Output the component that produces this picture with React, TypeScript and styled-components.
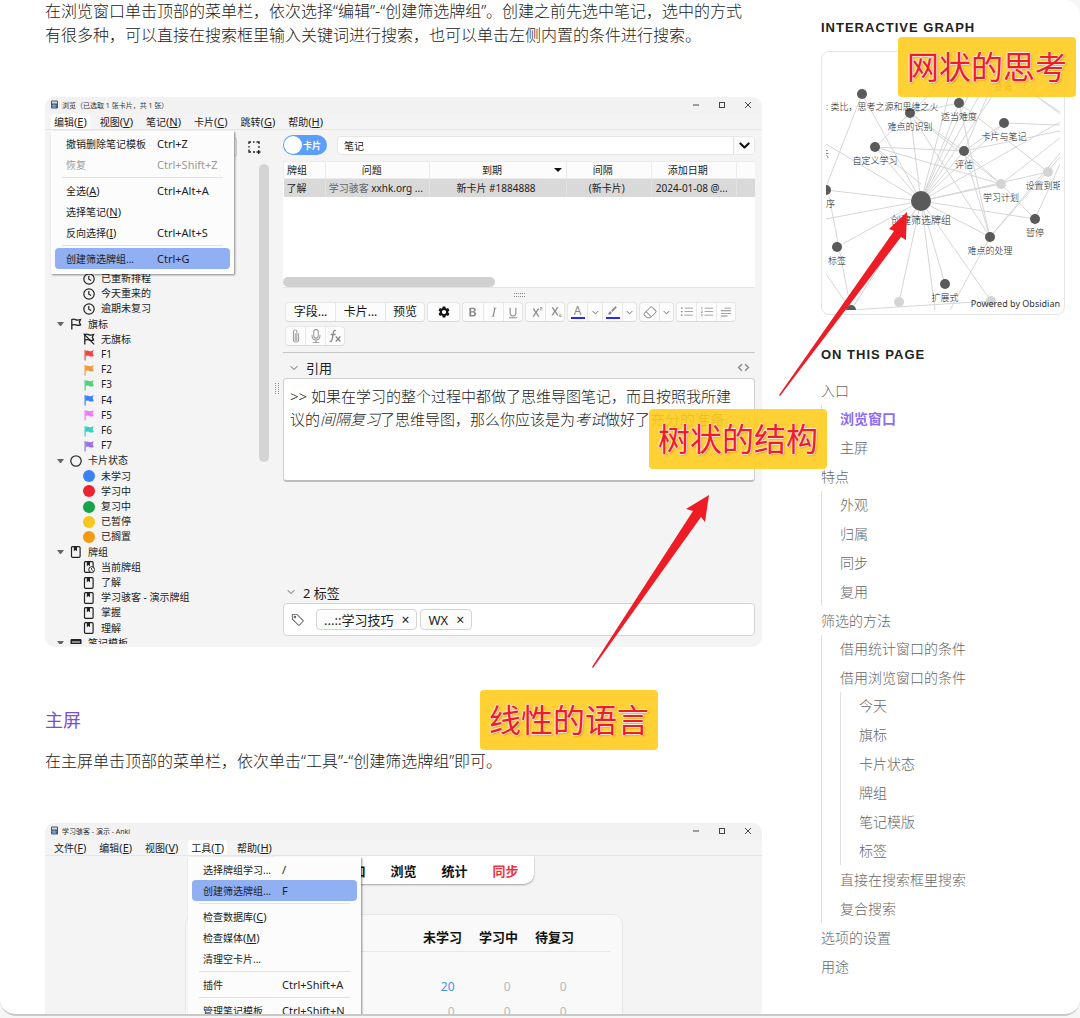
import React from "react";
import styled, { createGlobalStyle } from "styled-components";
import {
  BsTypeBold, BsTypeItalic, BsTypeUnderline, BsEraser, BsListUl, BsListOl, BsTextParagraph,
  BsPaperclip, BsMic, BsChevronDown, BsCode, BsTag,
} from "react-icons/bs";
import { MdSettings, MdSuperscript, MdSubscript, MdBrush } from "react-icons/md";

const sans = `"Noto Sans", "Noto Sans CJK SC", sans-serif`;

const GlobalStyle = createGlobalStyle`
  *, *::before, *::after { box-sizing: border-box; }
  body { margin: 0; background: #f6f6f6; font-family: ${sans}; color: #222; }
  button, input { font-family: inherit; color: inherit; }
  button { cursor: pointer; padding: 0; }
  ul, h1, h2, p { margin: 0; padding: 0; }
  ul { list-style: none; }
`;

/* ---------- Page ---------- */

const Frame = styled.div`
  position: relative;
  height: calc(100vh - 2px);
  overflow: hidden;
  background: #fff;
  border-bottom: 2px solid #c9c9c9;
  border-radius: 0 16px 16px 16px;
  display: grid;
  grid-template-columns: minmax(0, 1fr) 244px;
  column-gap: 59px;
  padding: 0 15px 0 45px;
`;

const Article = styled.main`
  display: flex;
  flex-direction: column;
  min-width: 0;
  margin-top: -1px;
`;

const Paragraph = styled.p`
  font-size: 16px;
  line-height: 24px;
  font-weight: 300;
  color: #222;
`;

const Heading = styled.h2`
  font-size: 18px;
  line-height: 26px;
  font-weight: 400;
  color: #7b4ccf;
  margin: 60px 0 16px;
`;

/* ---------- Window chrome ---------- */

const Window = styled.section`
  position: relative;
  background: #f4f4f4;
  border-radius: 10px;
  overflow: hidden;
  font-size: 10px;
  margin-top: 50px;
  flex-shrink: 0;
`;

const TitleBar = styled.header`
  height: 17px;
  background: #f2f2f2;
  display: flex;
  align-items: center;
  gap: 3px;
  padding: 0 9px 2px 5px;
  font-size: 7px;
  color: #333;
`;

const WindowButtons = styled.div`
  margin-left: auto;
  display: flex;
  gap: 16px;
`;

const WindowButton = styled.button`
  border: 0;
  background: none;
  width: 10px;
  height: 10px;
  display: flex;
  align-items: center;
  justify-content: center;
  svg { width: 8px; height: 8px; stroke: #444; fill: none; }
`;

const MenuBar = styled.nav`
  height: 16px;
  border-bottom: 1px solid #e6e6e6;
  display: flex;
  gap: 7px;
  padding-left: 6px;
`;

const MenuButton = styled.button<{ $open?: boolean }>`
  border: 0;
  border-radius: 3px 3px 0 0;
  padding: 0 3px;
  font-size: 10px;
  line-height: 15px;
  white-space: nowrap;
  background: ${(p) => (p.$open ? "#fff" : "transparent")};
`;

const Key = styled.span`
  font-size: 11px;
`;

const Dropdown = styled.div<{ $left: number }>`
  position: absolute;
  z-index: 2;
  top: 34px;
  left: ${(p) => p.$left}px;
  background: #fcfcfc;
  padding: 2px 4px 5px;
  box-shadow: 1px 1px 2px rgba(0, 0, 0, 0.45);
`;

const MenuItem = styled.button<{ $active?: boolean; $keyAt: number }>`
  width: 100%;
  height: 21px;
  display: grid;
  grid-template-columns: ${(p) => p.$keyAt}px 1fr;
  align-items: center;
  text-align: left;
  border: 0;
  border-radius: 4px;
  padding: 0 12px 0 11px;
  font-size: 10px;
  white-space: nowrap;
  background: ${(p) => (p.$active ? "#91aff3" : "transparent")};
  &:disabled { color: #9a9a9a; }
`;

const MenuRule = styled.hr`
  border: 0;
  height: 1px;
  margin: 2px 7px;
  background: #e2e2e2;
`;

/* ---------- Browser window: side tree ---------- */

const BrowserBody = styled.div`
  display: grid;
  grid-template-columns: 226px 12px minmax(0, 1fr);
  grid-template-rows: 100%;
  padding-right: 7px;
  height: 517px;
`;

const Side = styled.aside`
  display: grid;
  grid-template-columns: minmax(0, 1fr) 10px;
  grid-template-rows: 34px minmax(0, 1fr);
  padding: 0 2px 3px 0;
`;

const SideTools = styled.div`
  grid-column: 1 / 3;
  display: flex;
  align-items: center;
  gap: 11px;
  padding: 0 8px 0 6px;
`;

const SideSearch = styled.input`
  flex: 1;
  min-width: 0;
  height: 20px;
  border: 1px solid #ccc;
  border-radius: 3px;
  background: #efefef;
`;

const IconButton = styled.button`
  border: 0;
  background: none;
  display: flex;
  svg { width: 13px; height: 13px; }
`;

const TreeView = styled.div`
  overflow: hidden;
  padding-top: 107px;
`;

const Tree = styled.ul`
  height: 380px;
  display: grid;
  grid-auto-rows: 1fr;
`;

const TreeItem = styled.li<{ $level: number }>`
  display: flex;
  align-items: center;
  gap: 6px;
  padding-left: ${(p) => (p.$level ? 38 : 12)}px;
  font-size: 10px;
  line-height: 15px;
  white-space: nowrap;
  svg { width: 12px; height: 12px; flex-shrink: 0; }
`;

const Twisty = styled.span`
  width: 7px;
  border: 3px solid transparent;
  border-bottom: 0;
  border-top: 4px solid #666;
`;

const Dot = styled.span<{ $color: string }>`
  width: 12px;
  height: 12px;
  border-radius: 50%;
  background: ${(p) => p.$color};
`;

const ScrollThumb = styled.div`
  height: 298px;
  border-radius: 5px;
  background: #d4d4d4;
`;

const Splitter = styled.div`
  display: flex;
  justify-content: center;
  align-items: center;
`;

const Grip = styled.div<{ $vertical?: boolean }>`
  width: ${(p) => (p.$vertical ? 4 : 11)}px;
  height: ${(p) => (p.$vertical ? 11 : 4)}px;
  border: 1px dotted #8c8c8c;
  border-width: ${(p) => (p.$vertical ? "0 1px" : "1px 0")};
`;

/* ---------- Browser window: right pane ---------- */

const Pane = styled.div`
  display: flex;
  flex-direction: column;
  min-width: 0;
`;

const SearchRow = styled.div`
  display: flex;
  align-items: center;
  gap: 10px;
  margin: 5px 0 6px;
`;

const Toggle = styled.button`
  width: 44px;
  height: 20px;
  border: 0;
  border-radius: 10px;
  background: #5c9efc;
  color: #fff;
  font-size: 9px;
  font-weight: 600;
  display: flex;
  align-items: center;
  gap: 1px;
  padding: 0 1px;
  white-space: nowrap;
  &::before {
    content: "";
    width: 18px;
    height: 18px;
    border-radius: 50%;
    background: #fff;
  }
`;

const Combo = styled.div`
  flex: 1;
  height: 19px;
  display: flex;
  background: #fff;
  border: 1px solid #e6e6e6;
  border-radius: 4px;
  overflow: hidden;
`;

const ComboInput = styled.input`
  flex: 1;
  border: 0;
  outline: 0;
  padding: 0 6px;
  font-size: 10px;
  background: transparent;
`;

const ComboButton = styled.button`
  width: 21px;
  border: 0;
  border-left: 1px solid #e0e0e0;
  background: #fcfcfc;
  display: flex;
  align-items: center;
  justify-content: center;
  svg { width: 11px; height: 11px; stroke-width: 2; stroke: #111; }
`;

const TableArea = styled.div`
  height: 127px;
  display: flex;
  flex-direction: column;
  background: #fff;
  border-bottom: 1px solid #e4e4e4;
`;

const CardTable = styled.table`
  width: 100%;
  table-layout: fixed;
  border-collapse: collapse;
  font-size: 10px;
  line-height: 16px;
  text-align: center;
  white-space: nowrap;
  th { font-weight: 400; background: #fcfcfc; height: 17px; padding: 0 12px 0 0; border: 1px solid #ececec; }
  td { background: #d9d9d9; height: 18px; padding: 0 4px 0 0; border-right: 1px solid #e2e2e2; overflow: hidden; }
  th:first-child, td:first-child { text-align: left; padding: 0 0 0 3px; }
  th:last-child, td:last-child { border-right: 0; padding: 0; }
`;

const HeadCell = styled.div`
  position: relative;
`;

const SortMark = styled.span`
  position: absolute;
  right: -8px;
  top: 6px;
  border: 4px solid transparent;
  border-top-color: #111;
  border-bottom: 0;
`;

const Muted = styled.span`
  color: #666;
`;

const HorizontalThumb = styled.div`
  width: 45%;
  height: 10px;
  margin-top: auto;
  border-radius: 5px;
  background: #d0d0d0;
`;

const GripRow = styled.div`
  height: 14px;
  display: flex;
  align-items: center;
  justify-content: center;
`;

const Toolbar = styled.div`
  display: flex;
  flex-wrap: wrap;
  gap: 4px 2px;
  padding: 0 0 6px 2px;
  border-bottom: 1px solid #c8c8c8;
`;

const Group = styled.div`
  height: 20px;
  display: flex;
  background: #fcfcfc;
  border: 1px solid #e6e6e6;
  border-bottom-color: #d8d8d8;
  border-radius: 4px;
`;

const Tool = styled.button<{ $width: number; $strong?: boolean }>`
  width: ${(p) => p.$width}px;
  border: 0;
  background: none;
  display: flex;
  flex-direction: column;
  align-items: center;
  justify-content: center;
  gap: 1px;
  font-size: 12px;
  line-height: 18px;
  white-space: nowrap;
  color: ${(p) => (p.$strong ? "#151515" : "#8a8a8a")};
  & + & { border-left: 1px solid #e8e8e8; }
  svg { width: 14px; height: 14px; }
`;

const TinyChevron = styled(BsChevronDown)`
  && { width: 7px; height: 7px; stroke-width: 1; }
`;

const GlyphA = styled.span`
  font-size: 12px;
  line-height: 11px;
`;

const Swatch = styled.span`
  width: 14px;
  height: 2px;
  background: #2a2af0;
`;

const SwatchBrush = styled(MdBrush)`
  && { width: 11px; height: 11px; }
`;

const FieldHead = styled.div<{ $tall?: boolean }>`
  height: ${(p) => (p.$tall ? 25 : 22)}px;
  display: flex;
  align-items: center;
  gap: 8px;
  padding: ${(p) => (p.$tall ? "4px 5px 0 7px" : "0 5px 0 4px")};
  font-size: 13px;
  svg { width: 8px; height: 8px; color: #888; stroke-width: 1; }
  svg:last-child:not(:first-child) { width: 13px; height: 13px; margin-left: auto; }
`;

const FieldBox = styled.div`
  height: 104px;
  background: #fff;
  border: 1px solid #cfcfcf;
  border-bottom: 2px solid #bdbdbd;
  border-radius: 4px;
  padding: 6px;
  font-size: 15px;
  line-height: 23px;
  font-weight: 300;
  color: #222;
`;

const TagsArea = styled.div`
  margin-top: auto;
  margin-bottom: 11px;
`;

const TagBox = styled.div`
  height: 33px;
  background: #fff;
  border: 1px solid #d4d4d4;
  border-radius: 4px;
  display: flex;
  align-items: center;
  gap: 3px;
  padding: 0 7px;
`;

const TagIcon = styled(BsTag)`
  width: 14px;
  height: 14px;
  margin-right: 8px;
  color: #555;
`;

const Tag = styled.span`
  height: 21px;
  display: flex;
  align-items: center;
  gap: 8px;
  border: 1px solid #d4d4d4;
  border-radius: 4px;
  background: #fcfcfc;
  padding: 0 7px;
  font-size: 13px;
`;

const TagClose = styled.button`
  border: 0;
  background: none;
  font-size: 14px;
  line-height: 16px;
`;

/* ---------- Main window ---------- */

const MainBody = styled.div`
  height: 300px;
  display: flex;
  flex-direction: column;
  align-items: center;
`;

const TopNav = styled.nav`
  display: flex;
  gap: 25px;
  height: 28px;
  align-items: center;
  padding: 0 15px;
  background: #fff;
  border-radius: 0 0 10px 10px;
  box-shadow: 0 1px 2px rgba(0, 0, 0, 0.35);
`;

const NavLink = styled.a<{ $alert?: boolean }>`
  font-size: 13px;
  font-weight: 700;
  text-decoration: none;
  color: ${(p) => (p.$alert ? "#f0323c" : "#111")};
`;

const DeckPanel = styled.div`
  width: 438px;
  flex: 1;
  margin-top: 30px;
  padding: 10px 12px;
  background: #f9f9f9;
  border: 1px solid #e6e6e6;
  border-radius: 10px;
`;

const DeckTable = styled.table`
  width: 100%;
  border-collapse: collapse;
  font-size: 12px;
  line-height: 25px;
  th { font-size: 13px; font-weight: 700; height: 26px; width: 56px; padding: 0; color: #111; white-space: nowrap; border-bottom: 1px solid #e6e6e6; }
  th:first-child { width: auto; }
  th:last-child { width: 27px; }
  tbody::before { content: ""; display: block; height: 22px; }
  td { text-align: right; padding: 0 16px 0 0; height: 25px; color: #b8b8b8; }
  td:last-child { padding: 0; }
`;

const NewCount = styled.span`
  color: #4b8df5;
`;

/* ---------- Sidebar ---------- */

const Sidebar = styled.aside`
  padding-top: 18px;
  min-width: 0;
`;

const SideTitle = styled.h2`
  font-family: "Liberation Sans", Arial, sans-serif;
  font-size: 13px;
  line-height: 20px;
  font-weight: 700;
  letter-spacing: 1px;
  color: #222;
`;

const GraphCard = styled.div`
  position: relative;
  height: 264px;
  margin: 13px 0 30px;
  padding: 4px;
  border: 1px solid #e4e4e4;
  border-radius: 8px;
  svg { display: block; width: 100%; height: 100%; }
`;

const GraphCredit = styled.span`
  position: absolute;
  right: 4px;
  bottom: 3px;
  font-size: 9px;
  line-height: 14px;
  color: #333;
`;

const TocList = styled.ul<{ $nested?: boolean }>`
  margin-top: ${(p) => (p.$nested ? 0 : 12)}px;
  padding-left: ${(p) => (p.$nested ? 18 : 0)}px;
  border-left: ${(p) => (p.$nested ? "1px solid #e0e0e0" : "0")};
`;

const TocItem = styled.li`
  & + & { margin-top: 1px; }
`;

const TocLink = styled.a<{ $active?: boolean }>`
  display: block;
  font-size: 14px;
  line-height: 28px;
  font-weight: ${(p) => (p.$active ? 600 : 300)};
  color: ${(p) => (p.$active ? "#8d6cf5" : "#666")};
  text-decoration: none;
`;

/* ---------- Annotations ---------- */

const Callout = styled.div<{ $right: number; $top: number }>`
  position: absolute;
  z-index: 5;
  right: ${(p) => p.$right}px;
  top: ${(p) => p.$top}px;
  padding: 0 9px;
  border-radius: 4px;
  background: rgba(255, 204, 30, 0.9);
  color: #ee1c25;
  font-size: 32px;
  line-height: 60px;
  white-space: nowrap;
  text-shadow: 1px 0 #fbe3d8, -1px 0 #fbe3d8, 0 1px #fbe3d8, 0 -1px #fbe3d8, 1px 1px 2px rgba(120, 60, 0, 0.5);
`;

const Arrow = styled.svg<{ $right: number; $top: number }>`
  position: absolute;
  z-index: 4;
  right: ${(p) => p.$right}px;
  top: ${(p) => p.$top}px;
  fill: #ee1c25;
  pointer-events: none;
`;

/* ---------- Icons ---------- */

const AppIcon = () => (
  <svg width="9" height="9" viewBox="0 0 9 9" aria-hidden="true">
    <rect x="1" y="0.5" width="7" height="8" rx="1" fill="#4b5563" />
    <rect x="2" y="1.5" width="5" height="2" fill="#cfd8e3" />
    <path d="M4 3.5l1 1.6 1.9.2-1.4 1.2.4 1.8L4 7.4 2.3 8.3l.4-1.8L1.3 5.3l1.8-.2z" fill="#5aa7e8" />
  </svg>
);

const Clock = () => (
  <svg viewBox="0 0 12 12" fill="none" stroke="#222" strokeWidth="1.2" aria-hidden="true">
    <circle cx="6" cy="6" r="5.2" />
    <path d="M5.8 3v3.200l2.400 1.400" />
  </svg>
);

const Flag = ({ color }: { color: string }) => (
  <svg viewBox="0 0 12 12" aria-hidden="true">
    <path d="M1.5 1h1.2v10.5H1.5z" fill={color} />
    <path d="M2.5 2c1.500-.9 2.500-.6 3.500 0s2.500.3 4.800-1L9.600 4l1.200 3C8.500 8 7 7.600 6 7s-2-.6-3.500.2z" fill={color} />
  </svg>
);

const FlagOutline = ({ off }: { off?: boolean }) => (
  <svg viewBox="0 0 12 12" fill="none" stroke="#222" strokeWidth="1.3" aria-hidden="true">
    <path d="M1.8 11.5V1.6c1.5-.7 2.7-.5 3.7 0s2.8.6 5 0L9.3 4.3l1.3 2.6c-2 .8-3.6.5-4.7 0s-2.5-.5-4 .2" />
    {off && <path d="M.6.6l10.500 10.800" />}
  </svg>
);

const Ring = () => (
  <svg viewBox="0 0 12 12" aria-hidden="true"><circle cx="6" cy="6" r="5.200" fill="none" stroke="#333" strokeWidth="1.300" /></svg>
);

const Deck = ({ clock }: { clock?: boolean }) => (
  <svg viewBox="0 0 12 12" aria-hidden="true">
    <rect x="1.5" y="0.7" width="8.6" height="10.600" rx="1" fill="none" stroke="#222" strokeWidth="1.200" />
    <path d="M3.800 1v4.300l1.600-1.200L7 5.300V1z" fill="#222" />
    {clock && <><circle cx="8.600" cy="8.600" r="2.900" fill="#f4f4f4" stroke="#222" /><path d="M8.500 7v1.800l1.200.6" fill="none" stroke="#222" strokeWidth=".8" /></>}
  </svg>
);

const NoteType = () => (
  <svg viewBox="0 0 12 12" aria-hidden="true"><rect x=".5" y="2" width="11" height="8" rx="1" fill="#222" /><path d="M2 5h8M2 7.500h8" stroke="#f4f4f4" /></svg>
);

const SelectIcon = () => (
  <svg viewBox="0 0 13 13" fill="none" stroke="#222" strokeWidth="1.300" aria-hidden="true">
    <path d="M1 3V1h2M5 1h1.500M8.500 1h2.500v2M11 5v2M1 5v1.500M1 8.500V11h2M5 11h2M8.500 11h4M10.700 9v4" />
  </svg>
);

const FxIcon = () => (
  <svg viewBox="0 0 14 14" fill="none" stroke="currentColor" strokeWidth="1.300" aria-hidden="true">
    <path d="M8 1.600C6.300 1 5.700 2 5.400 3.600L4.200 10c-.3 1.900-1 2.700-2.600 2.200M2.600 5.500h5M7.800 7.500l4.600 5M12.400 7.500l-4.600 5" />
  </svg>
);

/* ---------- Data ---------- */

type Entry = { label: string; keyHint?: string; shortcut?: string; active?: boolean; disabled?: boolean } | null;

const editMenu: Entry[] = [
  { label: "撤销删除笔记模板", shortcut: "Ctrl+Z" },
  { label: "恢复", shortcut: "Ctrl+Shift+Z", disabled: true },
  null,
  { label: "全选", keyHint: "A", shortcut: "Ctrl+Alt+A" },
  { label: "选择笔记", keyHint: "N" },
  { label: "反向选择", keyHint: "I", shortcut: "Ctrl+Alt+S" },
  null,
  { label: "创建筛选牌组...", shortcut: "Ctrl+G", active: true },
];

const toolsMenu: Entry[] = [
  { label: "选择牌组学习...", shortcut: "/" },
  { label: "创建筛选牌组...", shortcut: "F", active: true },
  null,
  { label: "检查数据库", keyHint: "C" },
  { label: "检查媒体", keyHint: "M" },
  { label: "清理空卡片..." },
  null,
  { label: "插件", shortcut: "Ctrl+Shift+A" },
  null,
  { label: "管理笔记模板", shortcut: "Ctrl+Shift+N" },
];

const tree: { label: string; level: number; icon: React.ReactNode }[] = [
  { label: "已重新排程", level: 1, icon: <Clock /> },
  { label: "今天重来的", level: 1, icon: <Clock /> },
  { label: "逾期未复习", level: 1, icon: <Clock /> },
  { label: "旗标", level: 0, icon: <FlagOutline /> },
  { label: "无旗标", level: 1, icon: <FlagOutline off /> },
  ...["#f04444", "#eb9a3c", "#4fd07c", "#3b82f6", "#ea7ff5", "#36cfc4", "#9a72e8"].map((c, i) => ({
    label: `F${i + 1}`, level: 1, icon: <Flag color={c} />,
  })),
  { label: "卡片状态", level: 0, icon: <Ring /> },
  { label: "未学习", level: 1, icon: <Dot $color="#3b82f6" /> },
  { label: "学习中", level: 1, icon: <Dot $color="#ed2330" /> },
  { label: "复习中", level: 1, icon: <Dot $color="#16a34a" /> },
  { label: "已暂停", level: 1, icon: <Dot $color="#f7c61c" /> },
  { label: "已搁置", level: 1, icon: <Dot $color="#f79a0e" /> },
  { label: "牌组", level: 0, icon: <Deck /> },
  { label: "当前牌组", level: 1, icon: <Deck clock /> },
  { label: "了解", level: 1, icon: <Deck /> },
  { label: "学习骇客 - 演示牌组", level: 1, icon: <Deck /> },
  { label: "掌握", level: 1, icon: <Deck /> },
  { label: "理解", level: 1, icon: <Deck /> },
  { label: "笔记模板", level: 0, icon: <NoteType /> },
];

type TocNode = { label: string; active?: boolean; children?: TocNode[] };

const toc: TocNode[] = [
  { label: "入口", children: [{ label: "浏览窗口", active: true }, { label: "主屏" }] },
  { label: "特点", children: [{ label: "外观" }, { label: "归属" }, { label: "同步" }, { label: "复用" }] },
  {
    label: "筛选的方法",
    children: [
      { label: "借用统计窗口的条件" },
      {
        label: "借用浏览窗口的条件",
        children: ["今天", "旗标", "卡片状态", "牌组", "笔记模版", "标签"].map((label) => ({ label })),
      },
      { label: "直接在搜索框里搜索" },
      { label: "复合搜索" },
    ],
  },
  { label: "选项的设置" },
  { label: "用途" },
];

const hub = [95, 145];
const nodes: { x: number; y: number; label?: string; light?: boolean }[] = [
  { x: 36, y: 38 },
  { x: 84, y: 57, label: "难点的识别" },
  { x: 133, y: 47, label: "适当难度" },
  { x: 178, y: 67, label: "卡片与笔记" },
  { x: 49, y: 91, label: "自定义学习" },
  { x: 138, y: 95, label: "评估" },
  { x: 222, y: 116, label: "设置到期日", light: true },
  { x: 175, y: 128, label: "学习计划", light: true },
  { x: 0, y: 134, label: "排序" },
  { x: 209, y: 163, label: "暂停" },
  { x: 164, y: 181, label: "难点的处理" },
  { x: 11, y: 191, label: "标签" },
  { x: 119, y: 228, label: "扩展式" },
  { x: 73, y: 246, light: true },
  { x: 165, y: 245, light: true },
  { x: 25, y: 254 },
];
const hubLinks = [...nodes.map((n) => [n.x, n.y]), [0, 88], [0, 163], [109, 254], [133, 0], [160, 0], [175, 0], [180, 20], [234, 66]];
const links = [
  [133, 47, 164, 181], [138, 95, 164, 181], [84, 57, 138, 95], [84, 57, 175, 128], [138, 95, 175, 128],
  [49, 91, 138, 95], [49, 91, 175, 128], [84, 57, 133, 47], [36, 38, 0, 131], [133, 47, 222, 116],
  [178, 67, 234, 69], [138, 95, 178, 67], [49, 91, 133, 10], [84, 57, 164, 181], [3, 140, 25, 254],
  [0, 218, 25, 254], [25, 254, 165, 245], [175, 128, 209, 163], [209, 163, 234, 108], [164, 181, 234, 97],
  [164, 181, 234, 101], [164, 181, 124, 254], [175, 128, 234, 82], [138, 95, 234, 75], [177, 18, 234, 56],
  [177, 15, 234, 58], [138, 95, 170, 20], [133, 47, 140, 0], [49, 91, 95, 128], [25, 254, 95, 145],
];

/* ---------- Parts ---------- */

function Menu({ label, entries, left, keyAt }: { label: string; entries: Entry[]; left: number; keyAt: number }) {
  return (
    <Dropdown $left={left} role="menu" aria-label={label}>
      {entries.map((e, i) =>
        e ? (
          <MenuItem key={i} role="menuitem" $active={e.active} $keyAt={keyAt} disabled={e.disabled}>
            <span>{e.label}{e.keyHint && <Key>(<u>{e.keyHint}</u>)</Key>}</span>
            <Key>{e.shortcut}</Key>
          </MenuItem>
        ) : (
          <MenuRule key={i} />
        ),
      )}
    </Dropdown>
  );
}

function Chrome({ title, menus, open }: { title: string; menus: string[][]; open: string }) {
  return (
    <>
      <TitleBar>
        <AppIcon />
        {title}
        <WindowButtons>
          <WindowButton aria-label="最小化"><svg viewBox="0 0 8 8"><path d="M1 4h6" /></svg></WindowButton>
          <WindowButton aria-label="最大化"><svg viewBox="0 0 8 8"><rect x="1.500" y="1.500" width="5" height="5" /></svg></WindowButton>
          <WindowButton aria-label="关闭"><svg viewBox="0 0 8 8"><path d="M1 1l6 6M7 1L1 7" /></svg></WindowButton>
        </WindowButtons>
      </TitleBar>
      <MenuBar>
        {menus.map(([name, k]) => (
          <MenuButton key={name} $open={name === open}>{name}<Key>(<u>{k}</u>)</Key></MenuButton>
        ))}
      </MenuBar>
    </>
  );
}

function EditorToolbar() {
  return (
    <Toolbar>
      <Group>
        <Tool $width={49} $strong>字段...</Tool>
        <Tool $width={50} $strong>卡片...</Tool>
        <Tool $width={39} $strong>预览</Tool>
      </Group>
      <Group><Tool $width={31} $strong aria-label="选项"><MdSettings /></Tool></Group>
      <Group>
        <Tool $width={20} aria-label="粗体"><BsTypeBold /></Tool>
        <Tool $width={20} aria-label="斜体"><BsTypeItalic /></Tool>
        <Tool $width={19} aria-label="下划线"><BsTypeUnderline /></Tool>
      </Group>
      <Group>
        <Tool $width={19} aria-label="上标"><MdSuperscript /></Tool>
        <Tool $width={19} aria-label="下标"><MdSubscript /></Tool>
      </Group>
      <Group>
        <Tool $width={19} aria-label="文字颜色"><GlyphA>A</GlyphA><Swatch /></Tool>
        <Tool $width={15} aria-label="选择文字颜色"><TinyChevron /></Tool>
        <Tool $width={20} aria-label="高亮"><SwatchBrush /><Swatch /></Tool>
        <Tool $width={14} aria-label="选择高亮颜色"><TinyChevron /></Tool>
      </Group>
      <Group>
        <Tool $width={19} aria-label="清除格式"><BsEraser /></Tool>
        <Tool $width={14} aria-label="清除选项"><TinyChevron /></Tool>
      </Group>
      <Group>
        <Tool $width={19} aria-label="无序列表"><BsListUl /></Tool>
        <Tool $width={20} aria-label="有序列表"><BsListOl /></Tool>
        <Tool $width={19} aria-label="对齐"><BsTextParagraph /></Tool>
      </Group>
      <Group>
        <Tool $width={19} aria-label="附件"><BsPaperclip /></Tool>
        <Tool $width={20} aria-label="录音"><BsMic /></Tool>
        <Tool $width={19} aria-label="公式"><FxIcon /></Tool>
      </Group>
    </Toolbar>
  );
}

function BrowserWindow() {
  return (
    <Window>
      <Chrome
        title="浏览（已选取 1 张卡片，共 1 张）"
        open="编辑"
        menus={[["编辑", "E"], ["视图", "V"], ["笔记", "N"], ["卡片", "C"], ["跳转", "G"], ["帮助", "H"]]}
      />
      <Menu label="编辑" entries={editMenu} left={6} keyAt={91} />
      <BrowserBody>
        <Side>
          <SideTools>
            <SideSearch aria-label="搜索侧边栏" />
            <IconButton aria-label="选择"><SelectIcon /></IconButton>
          </SideTools>
          <TreeView>
            <Tree>
              {tree.map((t) => (
                <TreeItem key={t.label} $level={t.level}>
                  {t.level === 0 && <Twisty />}
                  {t.icon}
                  {t.label}
                </TreeItem>
              ))}
            </Tree>
          </TreeView>
          <ScrollThumb />
        </Side>
        <Splitter><Grip $vertical /></Splitter>
        <Pane>
          <SearchRow>
            <Toggle>卡片</Toggle>
            <Combo>
              <ComboInput aria-label="搜索" defaultValue="笔记" />
              <ComboButton aria-label="历史"><BsChevronDown /></ComboButton>
            </Combo>
          </SearchRow>
          <TableArea>
            <CardTable>
              <colgroup>
                <col style={{ width: "9%" }} /><col style={{ width: "22%" }} /><col />
                <col style={{ width: "18%" }} /><col style={{ width: "18%" }} /><col style={{ width: "4%" }} />
              </colgroup>
              <thead>
                <tr>
                  <th>牌组</th><th>问题</th>
                  <th><HeadCell>到期<SortMark /></HeadCell></th>
                  <th>间隔</th><th>添加日期</th><th aria-label="更多" />
                </tr>
              </thead>
              <tbody>
                <tr>
                  <td>了解</td>
                  <td><Muted>学习骇客</Muted> xxhk.org ...</td>
                  <td>新卡片 #1884888</td><td>(新卡片)</td><td>2024-01-08 @...</td><td />
                </tr>
              </tbody>
            </CardTable>
            <HorizontalThumb />
          </TableArea>
          <GripRow><Grip /></GripRow>
          <EditorToolbar />
          <FieldHead $tall><BsChevronDown />引用<BsCode /></FieldHead>
          <FieldBox>
            &gt;&gt; 如果在学习的整个过程中都做了思维导图笔记，而且按照我所建<br />
            议的<em>间隔复习</em>了思维导图，那么你应该是为<em>考试</em>做好了充分的准备。
          </FieldBox>
          <TagsArea>
            <FieldHead><BsChevronDown />2 标签</FieldHead>
            <TagBox>
              <TagIcon />
              <Tag>...::学习技巧<TagClose aria-label="移除 学习技巧">×</TagClose></Tag>
              <Tag>WX<TagClose aria-label="移除 WX">×</TagClose></Tag>
            </TagBox>
          </TagsArea>
        </Pane>
      </BrowserBody>
    </Window>
  );
}

function MainWindow() {
  return (
    <Window>
      <Chrome
        title="学习骇客 - 演示 - Anki"
        open="工具"
        menus={[["文件", "F"], ["编辑", "E"], ["视图", "V"], ["工具", "T"], ["帮助", "H"]]}
      />
      <Menu label="工具" entries={toolsMenu} left={143} keyAt={79} />
      <MainBody>
        <TopNav>
          <NavLink href="#decks">牌组</NavLink>
          <NavLink href="#add">添加</NavLink>
          <NavLink href="#browse">浏览</NavLink>
          <NavLink href="#stats">统计</NavLink>
          <NavLink href="#sync" $alert>同步</NavLink>
        </TopNav>
        <DeckPanel>
          <DeckTable>
            <thead><tr><th aria-label="牌组" /><th>未学习</th><th>学习中</th><th>待复习</th><th aria-label="选项" /></tr></thead>
            <tbody>
              <tr><td /><td><NewCount>20</NewCount></td><td>0</td><td>0</td><td /></tr>
              <tr><td /><td>0</td><td>0</td><td>0</td><td /></tr>
            </tbody>
          </DeckTable>
        </DeckPanel>
      </MainBody>
    </Window>
  );
}

function Graph() {
  return (
    <GraphCard>
      <svg viewBox="0 0 234 254" role="img" aria-label="Interactive graph">
        <g stroke="#d6d6d6" strokeWidth="1">
          {hubLinks.map(([x, y], i) => <line key={i} x1={hub[0]} y1={hub[1]} x2={x} y2={y} />)}
          {links.map(([a, b, c, d], i) => <line key={i} x1={a} y1={b} x2={c} y2={d} />)}
        </g>
        {nodes.map((n, i) => <circle key={i} cx={n.x} cy={n.y} r="5" fill={n.light ? "#d4d4d4" : "#5a5a5a"} />)}
        <circle cx={hub[0]} cy={hub[1]} r="10" fill="#5a5a5a" />
        <g fontSize="9" fontWeight="300" fill="#222" textAnchor="middle">
          {nodes.map((n, i) => n.label && <text key={i} x={n.x} y={n.y + 17}>{n.label}</text>)}
          <text x={hub[0]} y={hub[1] + 23} fontSize="10">创建筛选牌组</text>
          <text x="0" y="54" textAnchor="start">: 类比，思考之源和思维之火</text>
          <text x="3" y="102" textAnchor="end">提示</text>
          <text x="177" y="34">背诵</text>
        </g>
      </svg>
      <GraphCredit>Powered by Obsidian</GraphCredit>
    </GraphCard>
  );
}

function Toc({ items, nested }: { items: TocNode[]; nested?: boolean }) {
  return (
    <TocList $nested={nested}>
      {items.map((n) => (
        <TocItem key={n.label}>
          <TocLink href={`#${n.label}`} $active={n.active}>{n.label}</TocLink>
          {n.children && <Toc items={n.children} nested />}
        </TocItem>
      ))}
    </TocList>
  );
}

export default function App() {
  return (
    <Frame lang="zh-CN">
      <GlobalStyle />
      <Article>
        <Paragraph>
          在浏览窗口单击顶部的菜单栏，依次选择“编辑”-“创建筛选牌组”。创建之前先选中笔记，选中的方式<br />
          有很多种，可以直接在搜索框里输入关键词进行搜索，也可以单击左侧内置的条件进行搜索。
        </Paragraph>
        <BrowserWindow />
        <Heading>主屏</Heading>
        <Paragraph>在主屏单击顶部的菜单栏，依次单击“工具”-“创建筛选牌组”即可。</Paragraph>
        <MainWindow />
      </Article>
      <Sidebar>
        <SideTitle>INTERACTIVE GRAPH</SideTitle>
        <Graph />
        <SideTitle>ON THIS PAGE</SideTitle>
        <Toc items={toc} />
      </Sidebar>

      <Arrow $right={172} $top={212} width="130" height="184" viewBox="0 0 130 184" aria-hidden="true">
        <path d="M129 0L111 17l5 2L1 183l1 1L123 25l5 3z" />
      </Arrow>
      <Arrow $right={370} $top={495} width="119" height="173" viewBox="0 0 119 173" aria-hidden="true">
        <path d="M118 0L95 14l7 2L1 172l1 1L110 22l4 5z" />
      </Arrow>
      <Callout $right={4} $top={37}>网状的思考</Callout>
      <Callout $right={253} $top={409}>树状的结构</Callout>
      <Callout $right={422} $top={690}>线性的语言</Callout>
    </Frame>
  );
}
